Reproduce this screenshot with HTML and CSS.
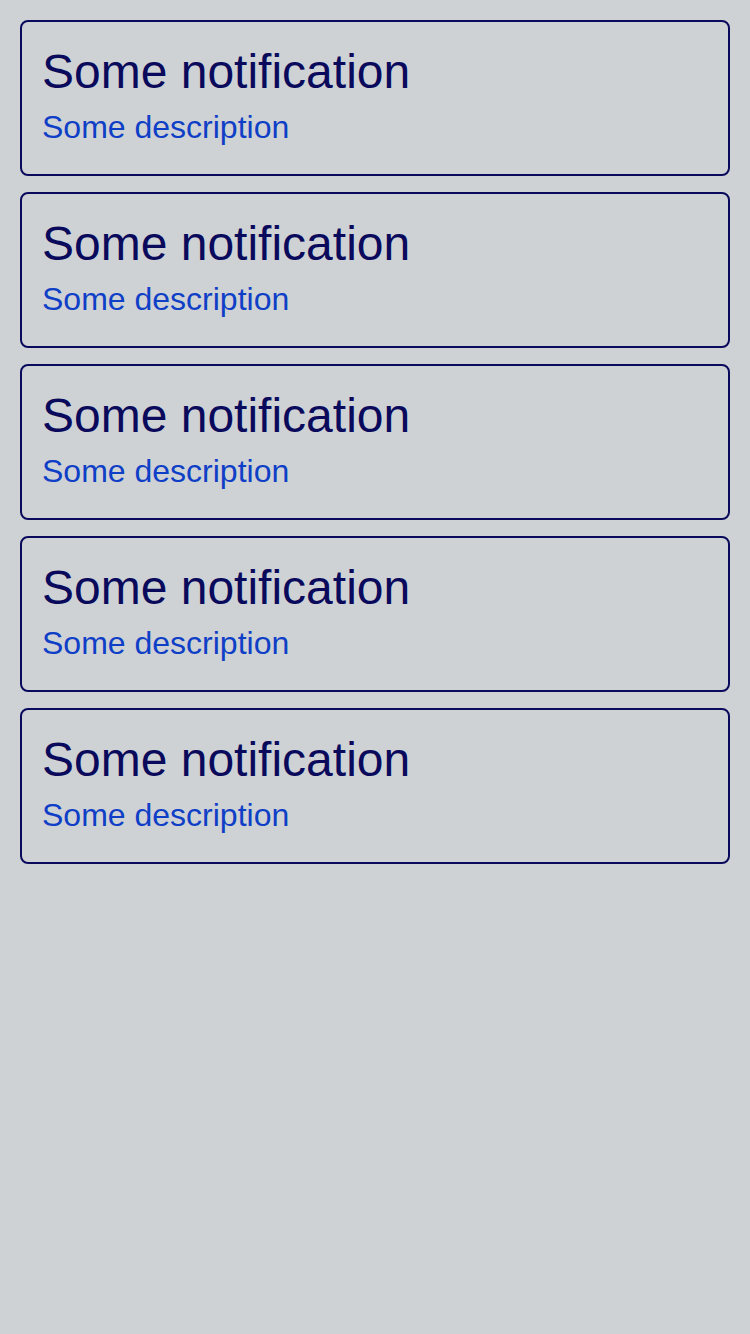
FILE: index.html
```html
<!DOCTYPE html>
<html>
<head>
<meta charset="utf-8">
<link rel="stylesheet" href="styles.css">
</head>
<body>
<div class="list">
  <div class="card"><div class="title">Some notification</div><div class="desc">Some description</div></div>
  <div class="card"><div class="title">Some notification</div><div class="desc">Some description</div></div>
  <div class="card"><div class="title">Some notification</div><div class="desc">Some description</div></div>
  <div class="card"><div class="title">Some notification</div><div class="desc">Some description</div></div>
  <div class="card"><div class="title">Some notification</div><div class="desc">Some description</div></div>
</div>
</body>
</html>
```
FILE: styles.css
```css
html, body {
  margin: 0;
  padding: 0;
  background: #cfd2d5;
  font-family: "Liberation Sans", Arial, sans-serif;
}
.list {
  display: flex;
  flex-direction: column;
  gap: 16px;
  padding: 20px;
}
.card {
  border: 2px solid #0a0a5c;
  border-radius: 8px;
  padding: 22px 20px 28px;
  display: flex;
  flex-direction: column;
  gap: 10px;
}
.title {
  font-size: 48px;
  line-height: normal;
  color: #0a0a5c;
}
.desc {
  font-size: 32px;
  line-height: normal;
  color: #0e3fc6;
}
```
